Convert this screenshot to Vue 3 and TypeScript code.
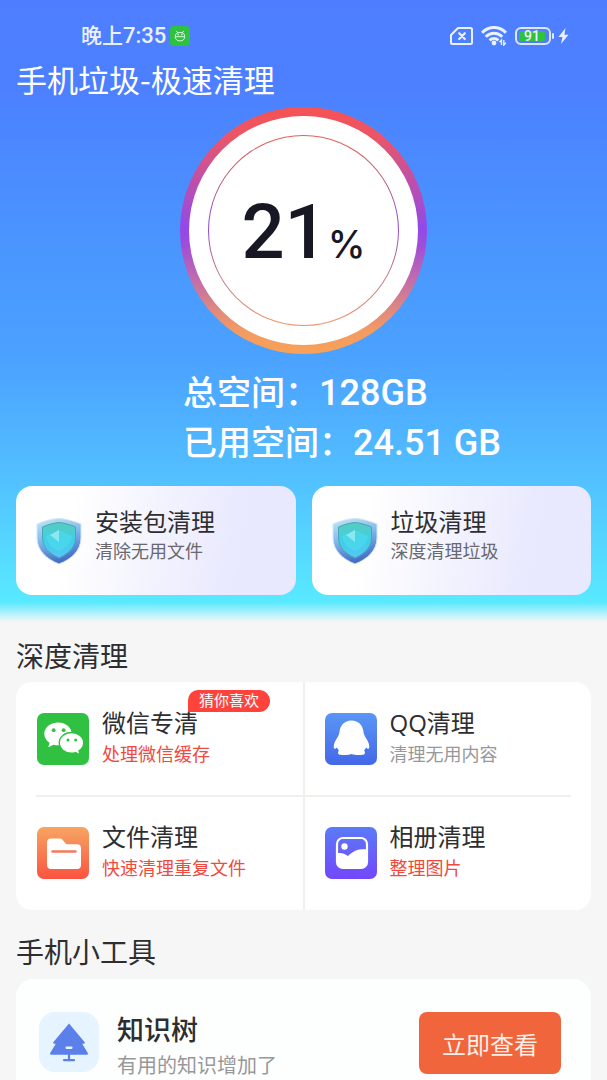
<script setup lang="ts">
interface QuickCard {
  title: string
  note: string
}
interface CleanItem {
  id: 'wechat' | 'qq' | 'file' | 'album'
  title: string
  note: string
  hot: boolean
  badge?: string
}

const percent = 21
const quickCards: QuickCard[] = [
  { title: '安装包清理', note: '清除无用文件' },
  { title: '垃圾清理', note: '深度清理垃圾' },
]
const cleanItems: CleanItem[] = [
  { id: 'wechat', title: '微信专清', note: '处理微信缓存', hot: true, badge: '猜你喜欢' },
  { id: 'qq', title: 'QQ清理', note: '清理无用内容', hot: false },
  { id: 'file', title: '文件清理', note: '快速清理重复文件', hot: true },
  { id: 'album', title: '相册清理', note: '整理图片', hot: true },
]
</script>

<template>
  <div class="app">
    <header class="hero">
      <div class="status">
        <div class="status-left">
          <span class="clock">晚上<span class="digits">7:35</span></span>
          <svg class="robot" viewBox="0 0 20 20" aria-hidden="true">
            <rect width="20" height="20" rx="4" fill="#2fc241" />
            <g fill="none" stroke="#d8f7dc" stroke-width="1" stroke-linecap="round">
              <path d="M6.500 5.200l1.200 1.600M13.500 5.200l-1.200 1.600M5.300 10.300C5 8 7 6.500 10 6.500s5 1.500 4.700 3.800zM5.300 11.200c.2 2.400 2 3.700 4.700 3.700s4.500-1.300 4.700-3.700" />
            </g>
            <circle cx="8.200" cy="8.700" r=".7" fill="#fff" />
            <circle cx="11.800" cy="8.700" r=".7" fill="#fff" />
          </svg>
        </div>
        <div class="status-right">
          <svg width="24" height="20" viewBox="0 0 24 20" aria-hidden="true">
            <path d="M8 2h12.500a1.500 1.500 0 0 1 1.500 1.500v13a1.500 1.500 0 0 1-1.500 1.500h-18A1.500 1.500 0 0 1 1 16.500V9z" fill="none" stroke="#eaf1ff" stroke-width="2" stroke-linejoin="round" />
            <path d="M9.200 7.200l5.600 5.800M14.800 7.200L9.200 13" stroke="#eaf1ff" stroke-width="2.200" stroke-linecap="round" />
          </svg>
          <svg class="wifi" width="26" height="20" viewBox="0 0 26 20" aria-hidden="true">
            <g fill="none" stroke="#eaf1ff" stroke-width="3">
              <path d="M1 6.800C7.800-.3 18.200-.3 25 6.800" />
              <path d="M4.800 10.800c4.700-4.800 11.700-4.800 16.400 0" />
              <path d="M8.600 14.300c2.600-2.500 6.200-2.500 8.800 0" />
            </g>
            <circle cx="13" cy="17" r="2.400" fill="#eaf1ff" />
            <path d="M20.500 19v-5l-2 2.200M22.800 14v5l2-2.200" fill="none" stroke="#eaf1ff" stroke-width="1.400" />
          </svg>
          <span class="battery"><span class="charge">91</span></span>
          <svg class="bolt" width="11" height="18" viewBox="0 0 11 18" aria-hidden="true">
            <path d="M7.500 1L.5 10h4L3 17l7.500-9.200H6.400z" fill="#eaf1ff" />
          </svg>
        </div>
      </div>

      <h1 class="title">手机垃圾-极速清理</h1>

      <div class="gauge">
        <div class="gauge-face">
          <div class="gauge-line">
            <div class="gauge-core">
              <span class="num">{{ percent }}</span><span class="unit">%</span>
            </div>
          </div>
        </div>
      </div>

      <div class="space">
        <p>总空间：<span class="amount">128GB</span></p>
        <p>已用空间：<span class="amount">24.51 GB</span></p>
      </div>

      <div class="quick">
        <button v-for="card in quickCards" :key="card.title" type="button" class="quick-card">
          <svg class="shield" viewBox="0 0 46 48" aria-hidden="true">
            <defs>
              <linearGradient id="rim" x1="0" y1="0" x2="0.300" y2="1">
                <stop offset="0" stop-color="#c3eaf5" />
                <stop offset=".5" stop-color="#7fb6ec" />
                <stop offset="1" stop-color="#456fc6" />
              </linearGradient>
              <linearGradient id="core" x1="0" y1="0" x2="0" y2="1">
                <stop offset="0" stop-color="#58ccbe" />
                <stop offset=".5" stop-color="#40cfe6" />
                <stop offset="1" stop-color="#55c6f6" />
              </linearGradient>
            </defs>
            <path d="M23 1.500C17 1.500 7 4.500 1 7v14c0 12 9 21 22 26 13-5 22-14 22-26V7C39 4.500 29 1.500 23 1.500z" fill="url(#rim)" stroke="#d3e6f6" stroke-width="1" />
            <path d="M23 5.500c-5 .5-11 2-16.500 4.500V21c0 9 6.500 15.500 16.500 20 10-4.500 16.500-11 16.500-20V10C34 7.500 28 6 23 5.500z" fill="url(#core)" stroke="#4aa5b8" stroke-width="1" />
            <path d="M23 13l-13 6c1 7 6 11.500 13 15.500 7-4 12-8.500 13-15.500z" fill="#4fdcee" opacity=".6" />
            <path d="M23 13v12l-9-7z" fill="#a5f0f2" opacity=".7" />
          </svg>
          <span class="quick-text">
            <span class="name">{{ card.title }}</span>
            <span class="note">{{ card.note }}</span>
          </span>
        </button>
      </div>
    </header>

    <main class="body">
      <h2 class="section">深度清理</h2>
      <div class="grid">
        <button v-for="item in cleanItems" :key="item.id" type="button" class="cell">
          <svg v-if="item.id === 'wechat'" class="icon" viewBox="0 0 52 52" aria-hidden="true">
            <rect width="52" height="52" rx="7" fill="#30c143" />
            <path d="M21 9.500c-7.700 0-13.700 5-13.700 11.300 0 3.700 2 6.800 5.200 8.900l-1.200 4.500 5.200-2.500c1.500.4 3 .6 4.500.6 7.700 0 13.700-5.100 13.700-11.500S28.700 9.500 21 9.500z" fill="#fff" />
            <path d="M34.500 19.500c-6.900 0-12.200 4.500-12.200 10.300S27.600 40.200 34.500 40.200c1.400 0 2.800-.2 4-.6l4.500 2.200-1-4c3-1.900 4.700-4.700 4.700-8 0-5.800-5.400-10.300-12.200-10.300z" fill="#fff" stroke="#30c143" stroke-width="1.400" />
            <g fill="#30c143">
              <circle cx="16.700" cy="17.200" r="1.900" /><circle cx="26.600" cy="17.200" r="1.900" />
              <circle cx="31" cy="27" r="1.500" /><circle cx="38.700" cy="27" r="1.500" />
            </g>
          </svg>
          <svg v-else-if="item.id === 'qq'" class="icon" viewBox="0 0 52 52" aria-hidden="true">
            <defs>
              <linearGradient id="blue" x1="0" y1="0" x2="0" y2="1">
                <stop offset="0" stop-color="#5a96f5" /><stop offset="1" stop-color="#4468e8" />
              </linearGradient>
            </defs>
            <rect width="52" height="52" rx="7" fill="url(#blue)" />
            <path d="M26.500 7.500C19.500 7.500 15 12.500 14.500 19c-.1 1.500-.8 3-1.500 4.500C11 27 8.500 30 8.700 34c.2 2.300 1.400 2.300 3.300.4.600 1.300 1.200 2.200 2 3-1.500 1.200-1.400 4 1.500 4.400 4 .6 8 .2 11-.8 3 1 7 1.400 11 .8 2.900-.4 3-3.200 1.500-4.400.8-.8 1.400-1.700 2-3 1.900 1.900 3.100 1.900 3.300-.4.2-4-2.300-7-4.300-10.500-.7-1.500-1.400-3-1.500-4.500C38 12.500 33.500 7.500 26.500 7.500z" fill="#fff" />
          </svg>
          <svg v-else-if="item.id === 'file'" class="icon" viewBox="0 0 52 52" aria-hidden="true">
            <defs>
              <linearGradient id="orange" x1="0" y1="0" x2="0" y2="1">
                <stop offset="0" stop-color="#f6a562" /><stop offset="1" stop-color="#fb5340" />
              </linearGradient>
            </defs>
            <rect width="52" height="52" rx="7" fill="url(#orange)" />
            <path d="M14 11.500h9c1 0 1.700.3 2.300 1l4 4.700H40a4 4 0 0 1 4 4V38a4 4 0 0 1-4 4H14a4 4 0 0 1-4-4V15.500a4 4 0 0 1 4-4z" fill="#fff" />
            <path d="M15.500 24.500h23" stroke="#f47a58" stroke-width="2.400" stroke-linecap="round" />
          </svg>
          <svg v-else class="icon" viewBox="0 0 52 52" aria-hidden="true">
            <defs>
              <linearGradient id="violet" x1="0" y1="0" x2="0" y2="1">
                <stop offset="0" stop-color="#5a7bf7" /><stop offset="1" stop-color="#7347fb" />
              </linearGradient>
            </defs>
            <rect width="52" height="52" rx="7" fill="url(#violet)" />
            <rect x="12" y="11" width="30" height="30" rx="6" fill="none" stroke="#fff" stroke-width="2.200" />
            <circle cx="19.500" cy="19.500" r="3.200" fill="#fff" />
            <path d="M12 26.500c4-1 7 0 11 2.500 6-6 12-7.500 19-6.500V36a5 5 0 0 1-5 5H17a5 5 0 0 1-5-5z" fill="#fff" />
          </svg>
          <span class="cell-text">
            <span class="name">{{ item.title }}</span>
            <span class="note" :class="item.hot ? 'hot' : 'calm'">{{ item.note }}</span>
            <span v-if="item.badge" class="badge">{{ item.badge }}</span>
          </span>
        </button>
      </div>

      <h2 class="section tools">手机小工具</h2>
      <div class="tool-card">
        <svg class="tree" viewBox="0 0 60 60" aria-hidden="true">
          <rect width="60" height="60" rx="16" fill="#e5f4fe" />
          <path d="M30 11.500L45.500 30c.7 1 .3 1.700-.7 1.700h-1.600L48.800 41c.4 1 0 1.700-1 1.700H12.200c-1 0-1.400-.7-1-1.700l5.600-9.300h-1.600c-1 0-1.400-.7-.7-1.700z" fill="#5c80ea" />
          <path d="M30 42v6.500M25 48.200h10" stroke="#5c80ea" stroke-width="2.200" stroke-linecap="round" />
          <rect x="26.500" y="34.500" width="7" height="2.400" rx="1" fill="#e5f4fe" />
        </svg>
        <div class="tool-text">
          <h3>知识树</h3>
          <p>有用的知识增加了</p>
        </div>
        <button type="button" class="view">立即查看</button>
      </div>
    </main>
  </div>
</template>

<style>
body {
  margin: 0;
  background: #f6f6f7;
}
</style>

<style scoped>
.app {
  height: 100vh;
  overflow-y: auto;
  scrollbar-width: none;
  background: #f6f6f7;
  color: #2e2e30;
  font-family: Roboto, "Noto Sans CJK SC", sans-serif;
}
h1, h2, h3, p {
  margin: 0;
  font-weight: 400;
}
button {
  border: 0;
  padding: 0;
  background: none;
  font: inherit;
  color: inherit;
  text-align: left;
  cursor: pointer;
}
.hero {
  padding: 20px 16px 29px;
  background: linear-gradient(180deg, #4e7eff 0, #4c80ff 90px, #4a95ff 240px, #4ba2ff 360px, #52bfff 475px, #56dcff 560px, #58e9ff 602px, #f6f6f7 622px);
}
.status {
  display: flex;
  justify-content: space-between;
  align-items: center;
  height: 32px;
  padding: 0 22px 0 65px;
  color: #eaf1ff;
}
.status-left, .status-right {
  display: flex;
  align-items: center;
}
.status-left {
  gap: 4px;
}
.clock {
  font-size: 21px;
  font-weight: 500;
  line-height: 32px;
}
.digits {
  font-size: 22px;
}
.robot {
  width: 20px;
  height: 20px;
}
.wifi {
  margin-left: 7px;
}
.battery {
  position: relative;
  box-sizing: border-box;
  width: 36px;
  height: 18px;
  margin-left: 8px;
  padding: 2px;
  border: 2px solid #dce8ff;
  border-radius: 6px;
}
.battery::after {
  content: "";
  position: absolute;
  top: 4px;
  right: -5px;
  width: 2px;
  height: 6px;
  border-radius: 1px;
  background: #dce8ff;
}
.charge {
  display: block;
  width: 26px;
  height: 10px;
  border-radius: 2px;
  background: #2fc241;
  font-size: 14px;
  font-weight: 500;
  line-height: 11px;
  text-align: center;
}
.bolt {
  margin-left: 7px;
}
.title {
  margin-top: 5px;
  color: #fff;
  font-family: "Noto Sans CJK SC", sans-serif;
  font-size: 31px;
  line-height: 44px;
}
.gauge {
  box-sizing: border-box;
  width: 247px;
  height: 247px;
  margin: 6px auto 0;
  padding: 9px;
  border-radius: 50%;
  background: linear-gradient(180deg, #f65252 0, #ea5668 12%, #9249ea 49%, #a04dd8 56%, #f29a64 90%, #f8a258 100%);
}
.gauge-face {
  box-sizing: border-box;
  height: 100%;
  padding: 19px;
  border-radius: 50%;
  background: #fff;
}
.gauge-line {
  box-sizing: border-box;
  height: 100%;
  padding: 1px;
  border-radius: 50%;
  background: linear-gradient(180deg, #e4605c 0, #b8607c 25%, #8a4ae0 48%, #b46c88 65%, #f0986c 100%);
}
.gauge-core {
  display: flex;
  justify-content: center;
  align-items: baseline;
  height: 100%;
  border-radius: 50%;
  background: #fff;
  color: #181824;
  line-height: 193px;
}
.num {
  font-size: 76px;
  font-weight: 500;
}
.unit {
  font-family: Inter, sans-serif;
  font-size: 38px;
  font-weight: 500;
}
.space {
  width: 320px;
  margin: 14px auto 0;
  padding-left: 79px;
  box-sizing: content-box;
  color: #fff;
  font-size: 34px;
  line-height: 50px;
}
.space p {
  font-weight: 500;
}
.amount {
  font-size: 36px;
  line-height: 1;
}
.quick {
  display: grid;
  grid-template-columns: 1fr 1fr;
  gap: 16px;
  margin-top: 18px;
}
.quick-card {
  display: flex;
  align-items: center;
  gap: 13px;
  height: 109px;
  padding-left: 20px;
  border-radius: 16px;
  background: linear-gradient(100deg, #fff 20%, #f3f3fe 50%, #e8e8ff 80%);
}
.shield {
  width: 46px;
  height: 48px;
}
.quick-text {
  display: flex;
  flex-direction: column;
  padding-bottom: 10px;
}
.name {
  font-family: "Open Sans", "Noto Sans CJK SC", sans-serif;
  font-size: 24px;
  line-height: 32px;
}
.note {
  font-size: 18px;
  line-height: 28px;
  color: #68686e;
}
.body {
  padding: 0 16px;
}
.section {
  padding-top: 14px;
  font-size: 28px;
  line-height: 40px;
}
.grid {
  display: grid;
  grid-template-columns: 1fr 1fr;
  position: relative;
  margin-top: 4px;
  border-radius: 16px;
  background: #fff;
}
.grid::before, .grid::after {
  content: "";
  position: absolute;
  background: #efefec;
}
.grid::before {
  top: 0;
  bottom: 0;
  left: 50%;
  width: 2px;
  margin-left: -1px;
}
.grid::after {
  left: 20px;
  right: 20px;
  top: 50%;
  height: 2px;
  margin-top: -1px;
}
.cell {
  display: flex;
  align-items: center;
  gap: 13px;
  height: 114px;
  padding-left: 21px;
}
.icon {
  width: 52px;
  height: 52px;
}
.cell-text {
  display: flex;
  flex-direction: column;
  position: relative;
}
.cell-text .note {
  line-height: 32px;
}
.cell-text .hot {
  color: #f04a3e;
}
.cell-text .calm {
  color: #98989a;
}
.badge {
  position: absolute;
  top: -17px;
  left: 86px;
  padding: 0 11px;
  border-radius: 10px 11px 11px 0;
  background: #fd433b;
  color: #fff;
  font-size: 15px;
  line-height: 22px;
  white-space: nowrap;
}
.tools {
  padding-top: 24px;
}
.tool-card {
  display: flex;
  align-items: flex-start;
  margin-top: 5px;
  padding: 33px 30px 30px 23px;
  border-radius: 18px;
  background: #fdfefe;
}
.tree {
  flex: none;
  width: 60px;
  height: 60px;
}
.tool-text {
  flex: 1;
  margin-left: 18px;
}
.tool-text h3 {
  font-size: 27px;
  font-weight: 500;
  line-height: 38px;
}
.tool-text p {
  color: #98989a;
  font-size: 20px;
  line-height: 32px;
}
.view {
  height: 62px;
  padding: 0 23px;
  border-radius: 8px;
  background: #f0653c;
  color: #fdeee8;
  font-size: 24px;
  text-align: center;
}
</style>
